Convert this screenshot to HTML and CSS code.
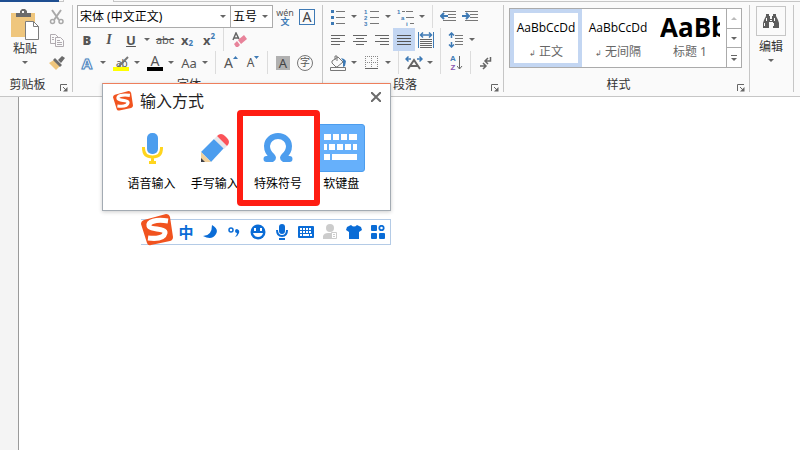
FILE: index.html
```html
<!DOCTYPE html>
<html lang="zh-CN">
<head>
    <meta charset="UTF-8">
    <meta name="viewport" content="width=device-width, initial-scale=1.0">
    <title>输入方式</title>
    <link rel="stylesheet" href="styles.css">
</head>
<body>
    <div class="tabs">
        <span class="tab-file"></span>
        <span class="tab-gap"></span>
        <span class="tab-active"></span>
        <span class="tab-rest"></span>
    </div>

    <header class="ribbon">
        <section class="group">
            <div class="clipboard">
                <button class="big-btn paste">
                    <svg width="30" height="32" viewBox="0 0 30 32">
                        <path fill="#efc67d" d="M1 4h24v24H1z"/>
                        <path fill="#6b6b6b" d="M6 4h4V2l2-2h3l2 2v2h4v4H6z"/>
                        <path fill="#fafafa" d="M12 2h2v2h-2z"/>
                        <path fill="#fff" stroke="#7d7d7d" d="M15.500 12.500h8l5 5v13h-13z"/>
                        <path fill="none" stroke="#7d7d7d" d="M23.500 12.500v5h5"/>
                    </svg>
                    <span>粘贴</span>
                    <i class="caret"></i>
                </button>
                <div class="clip-tools">
                    <button class="tool" aria-label="剪切">
                        <svg width="16" height="16" viewBox="0 0 16 16" fill="none" stroke="#a9a9a9">
                            <path stroke-width="2" d="M3 1l7 10M12 1L5 11"/>
                            <circle cx="3.500" cy="12.500" r="2" stroke-width="1.500"/>
                            <circle cx="12" cy="12.500" r="2" stroke-width="1.500"/>
                        </svg>
                    </button>
                    <button class="tool" aria-label="复制">
                        <svg width="16" height="16" viewBox="0 0 16 16" fill="#fafafa" stroke="#b0abb0">
                            <path d="M1.500 2.500h5l3 3v6h-8z"/>
                            <path d="M6.500 5.500h5l3 3v6h-8z"/>
                            <path d="M3 5.500h2M3 7.500h2M8 8.500h3M8 10.500h5M8 12.500h5"/>
                        </svg>
                    </button>
                    <button class="tool" aria-label="格式刷">
                        <svg width="16" height="16" viewBox="0 0 16 16">
                            <path fill="#efc67d" d="M0 8l5-3 6 6-4 4z"/>
                            <path fill="#6b6b6b" d="M4 5l2-2 7 7-2 2zM9 5l4-4 3 2-4 5z"/>
                        </svg>
                    </button>
                </div>
            </div>
            <footer class="group-foot"><span>剪贴板</span><button class="launcher" aria-label="剪贴板选项"><svg width="8" height="8"><path fill="none" stroke="#666" d="M.5 7V.5H7M3 3l3 3"/><path fill="#666" d="M7.500 3v4.500H3z"/></svg></button></footer>
        </section>

        <section class="group">
            <div class="row">
                <div class="combo font-name">
                    <select aria-label="字体"><option>宋体 (中文正文)</option></select>
                    <i class="caret"></i>
                </div>
                <div class="combo font-size">
                    <select aria-label="字号"><option>五号</option></select>
                    <i class="caret"></i>
                </div>
                <button class="tool pinyin"><span>wén</span><b>文</b></button>
                <button class="tool"><span class="char-box">A</span></button>
            </div>
            <div class="row">
                <button class="tool letter"><b>B</b></button>
                <button class="tool letter serif"><em>I</em></button>
                <button class="tool letter"><u>U</u></button>
                <button class="drop" aria-label="下划线样式"><i class="caret"></i></button>
                <button class="tool strike"><s>abc</s></button>
                <button class="tool script">x<sub>2</sub></button>
                <button class="tool script">x<sup>2</sup></button>
                <i class="divider"></i>
                <button class="tool" aria-label="清除格式">
                    <svg width="16" height="16" viewBox="0 0 16 16">
                        <path fill="none" stroke="#666" stroke-width="1.500" d="M2 8l3-7 3 6M3 6h4"/>
                        <path fill="#e8839a" d="M7 8l6-5 3 4-6 5zM6 9l3 4-2 2-2 0-2-3z"/>
                    </svg>
                </button>
            </div>
            <div class="row">
                <button class="tool glow">A</button>
                <button class="drop" aria-label="文本效果"><i class="caret"></i></button>
                <button class="tool marker">
                    <span>ab</span>
                    <svg width="16" height="16" viewBox="0 0 16 16">
                        <path stroke="#777" stroke-width="2" d="M15 2L8 9"/>
                        <path fill="#777" d="M5 11l3-4 2 2-3 2z"/>
                        <path fill="#ff0" d="M0 12h16v4H0z"/>
                    </svg>
                </button>
                <button class="drop" aria-label="突出显示颜色"><i class="caret"></i></button>
                <button class="tool"><span class="font-color">A</span></button>
                <button class="drop" aria-label="字体颜色"><i class="caret"></i></button>
                <button class="tool case">Aa</button>
                <button class="drop" aria-label="更改大小写"><i class="caret"></i></button>
                <i class="divider"></i>
                <button class="tool grow">A<svg width="5" height="3"><path fill="#3e7ab5" d="M0 3l2.500-3L5 3z"/></svg></button>
                <button class="tool grow small">A<svg width="5" height="3"><path fill="#3e7ab5" d="M0 0h5L2.500 3z"/></svg></button>
                <i class="divider"></i>
                <button class="tool"><span class="shade">A</span></button>
                <button class="tool"><span class="ring">字</span></button>
            </div>
            <footer class="group-foot"><span>字体</span><button class="launcher" aria-label="字体选项"></button></footer>
        </section>

        <section class="group para">
            <div class="row">
                <button class="tool" aria-label="项目符号">
                    <svg width="16" height="16" viewBox="0 0 16 16"><path fill="#3e7ab5" d="M1 1h3v3H1zM1 7h3v3H1zM1 13h3v3H1z"/><path stroke="#777" d="M6 2.500h9M6 8.500h9M6 14.500h9"/></svg>
                </button>
                <button class="drop" aria-label="项目符号库"><i class="caret"></i></button>
                <button class="tool" aria-label="编号">
                    <svg width="16" height="18" viewBox="0 0 16 18"><g class="svg-num"><text x="0" y="6">1</text><text x="0" y="12">2</text><text x="0" y="18">3</text></g><path stroke="#777" d="M6 3.500h9M6 9.500h9M6 15.500h9"/></svg>
                </button>
                <button class="drop" aria-label="编号库"><i class="caret"></i></button>
                <button class="tool" aria-label="多级列表">
                    <svg width="18" height="18" viewBox="0 0 18 18"><g class="svg-num"><text x="0" y="6">1</text><text x="4" y="12">a</text><text x="9" y="18">i</text></g><path stroke="#777" d="M5 3.500h3M9 3.500h7M9 9.500h8M13 15.500h4"/></svg>
                </button>
                <button class="drop" aria-label="列表库"><i class="caret"></i></button>
                <i class="divider"></i>
                <button class="tool" aria-label="减少缩进">
                    <svg width="16" height="14" viewBox="0 0 16 14"><path stroke="#777" d="M3 1.500h13M8 4.500h8M8 7.500h8M3 10.500h13"/><path fill="none" stroke="#3e7ab5" stroke-width="2" d="M8 6H1M4 3L1 6l3 3"/></svg>
                </button>
                <button class="tool" aria-label="增加缩进">
                    <svg width="16" height="14" viewBox="0 0 16 14"><path stroke="#777" d="M3 1.500h13M8 4.500h8M8 7.500h8M3 10.500h13"/><path fill="none" stroke="#3e7ab5" stroke-width="2" d="M0 6h7M4 3l3 3-3 3"/></svg>
                </button>
            </div>
            <div class="row">
                <button class="tool" aria-label="左对齐"><svg width="14" height="12" stroke="#666"><path d="M0 1.500h14M0 4.500h9M0 7.500h14M0 10.500h9"/></svg></button>
                <button class="tool" aria-label="居中"><svg width="14" height="12" stroke="#666"><path d="M0 1.500h14M3 4.500h8M0 7.500h14M3 10.500h8"/></svg></button>
                <button class="tool" aria-label="右对齐"><svg width="14" height="12" stroke="#666"><path d="M0 1.500h14M5 4.500h9M0 7.500h14M5 10.500h9"/></svg></button>
                <button class="tool active" aria-label="两端对齐"><svg width="14" height="12" stroke="#555"><path d="M0 1.500h14M0 4.500h14M0 7.500h14M0 10.500h14"/></svg></button>
                <button class="tool" aria-label="分散对齐">
                    <svg width="16" height="16" viewBox="0 0 16 16"><path stroke="#3e7ab5" d="M.5 0v16M15.500 0v16"/><path fill="none" stroke="#3e7ab5" stroke-width="1.500" d="M3 3h10M5 .5L2.500 3 5 5.500M11 .5L13.500 3 11 5.500"/><path stroke="#666" d="M2 7.500h12M2 9.500h12M2 11.500h12M2 13.500h12M2 15.500h12"/></svg>
                </button>
                <i class="divider"></i>
                <button class="tool" aria-label="行距">
                    <svg width="16" height="16" viewBox="0 0 16 16"><path fill="none" stroke="#3e7ab5" stroke-width="1.500" d="M3.500 1v5M1 3.500L3.500 1 6 3.500M3.500 15v-5M1 12.500L3.500 15 6 12.500"/><path stroke="#777" d="M7 3.500h8M7 6.500h8M7 9.500h8M7 12.500h8"/></svg>
                </button>
                <button class="drop" aria-label="行距选项"><i class="caret"></i></button>
            </div>
            <div class="row">
                <button class="tool" aria-label="底纹">
                    <svg width="18" height="16" viewBox="0 0 18 16"><path fill="none" stroke="#777" d="M3 6l6-4 5 5-6 5H7L3 8zM8 6V1H6v4M1.500 12.500h15v3h-15z"/><path fill="#3e7ab5" d="M12 3l3 1 2 2-1 5-2 1V6z"/></svg>
                </button>
                <button class="drop" aria-label="底纹颜色"><i class="caret"></i></button>
                <button class="tool" aria-label="边框">
                    <svg width="14" height="14" viewBox="0 0 14 14"><path stroke="#888" stroke-dasharray="1 1" d="M0 .5h13M0 6.500h13M.5 0v13M6.500 0v13M12.500 0v13"/><path stroke="#666" d="M0 12.500h13"/></svg>
                </button>
                <button class="drop" aria-label="边框样式"><i class="caret"></i></button>
                <i class="divider"></i>
                <button class="tool" aria-label="中文版式">
                    <svg width="18" height="16" viewBox="0 0 18 16" fill="none"><path stroke="#3e7ab5" stroke-width="1.500" d="M1 4h5M3.500 1.500L1 4l2.500 2.500M17 4h-5M14.500 1.500L17 4l-2.500 2.500"/><path stroke="#666" stroke-width="2" d="M3 14l6-9 6 9M5 11h8"/></svg>
                </button>
                <button class="drop" aria-label="版式选项"><i class="caret"></i></button>
                <i class="divider"></i>
                <button class="tool sort">
                    <span><b>A</b><b>Z</b></span>
                    <svg width="6" height="16" fill="none" stroke="#666"><path d="M2.500 1v13M0 11l2.500 3L5 11"/></svg>
                </button>
                <i class="divider"></i>
                <button class="tool" aria-label="显示标记">
                    <svg width="12" height="14" viewBox="0 0 12 14" fill="none" stroke="#666" stroke-width="1.500"><path d="M10.500 1v4H5M8 2L5 5l3 3M0 10h5M3 7l3 3-3 3"/></svg>
                </button>
            </div>
            <footer class="group-foot"><span>段落</span><button class="launcher" aria-label="段落选项"><svg width="8" height="8"><path fill="none" stroke="#666" d="M.5 7V.5H7M3 3l3 3"/><path fill="#666" d="M7.500 3v4.500H3z"/></svg></button></footer>
        </section>

        <section class="group styles">
            <div class="gallery">
                <button class="style selected"><span class="sample">AaBbCcDd</span><span class="style-name"><small>↲</small> 正文</span></button>
                <button class="style"><span class="sample">AaBbCcDd</span><span class="style-name"><small>↲</small> 无间隔</span></button>
                <button class="style"><span class="sample heading">AaBb</span><span class="style-name">标题 1</span></button>
                <div class="gallery-nav">
                    <button aria-label="上一行" disabled><i class="caret up"></i></button>
                    <button aria-label="下一行"><i class="caret"></i></button>
                    <button aria-label="更多"><i class="bar"></i><i class="caret"></i></button>
                </div>
            </div>
            <footer class="group-foot"><span>样式</span><button class="launcher" aria-label="样式选项"><svg width="8" height="8"><path fill="none" stroke="#666" d="M.5 7V.5H7M3 3l3 3"/><path fill="#666" d="M7.500 3v4.500H3z"/></svg></button></footer>
        </section>

        <section class="group editing">
            <button class="big-btn">
                <span class="find">
                    <svg width="16" height="14" viewBox="0 0 16 14" fill="#5c5c5c"><path d="M3 0h3v2h1v3h2V2h1V0h3v2l2 4 1 3v5h-6V8H6v6H0V9l1-3 2-4z"/><path fill="#fafafa" d="M1 9h1v3H1zM3 4h1v3H3zM10 9h1v3h-1zM11 4h1v3h-1zM7 6h2v1H7z"/></svg>
                </span>
                <span>编辑</span>
                <i class="caret"></i>
            </button>
        </section>
    </header>

    <main class="document">
        <div class="margin"></div>
        <div class="page"></div>
    </main>

    <div class="input-panel">
        <div class="panel-head">
            <svg class="logo" width="20" height="20" viewBox="0 0 32 32">
                <path fill="#f1531f" d="M3 6L25 0q3 0 4 3l3 20q0 3-3 4L10 31q-3 1-4-2L0 10q0-3 3-4z"/>
                <path fill="none" stroke="#fff" stroke-width="5" d="M27 7C14 5 7 8 8 12s17 2 16 7-9 6-17 5"/>
            </svg>
            <h1>输入方式</h1>
            <button class="close" aria-label="关闭"><svg width="10" height="10"><path stroke="#6b6b6b" stroke-width="2" d="M0 0l10 10M10 0L0 10"/></svg></button>
        </div>
        <div class="modes">
            <button class="mode">
                <span class="mode-icon">
                    <svg width="24" height="32" viewBox="0 0 24 32"><rect x="7" y="1" width="11" height="21" rx="5" fill="#4c9dee"/><path fill="none" stroke="#ffd51e" stroke-width="3" d="M3.500 15v1q0 9 9 9t9-9v-1M12.500 25v5M9 30.500h7"/></svg>
                </span>
                语音输入
            </button>
            <button class="mode">
                <span class="mode-icon">
                    <svg width="30" height="30" viewBox="0 0 30 30"><path fill="#4c9dee" d="M1 19L14 6l10 9-13 14z"/><path fill="#f3d19b" d="M1 19l10 10H1z"/><path fill="#3e4048" d="M1 25l4 4H1z"/><path fill="#e6e6ea" d="M14 6l3-3 10 10-3 3z"/><path fill="#fb5359" d="M17 3q4-4 8 0l2 2q4 4 0 8z"/></svg>
                </span>
                手写输入
            </button>
            <button class="mode marked">
                <span class="mode-icon">
                    <svg width="30" height="30" viewBox="0 0 30 30"><path fill="none" stroke="#4c9dee" stroke-width="6" stroke-linecap="round" d="M3.500 26H9q2-1 0-3-5-4-5-10a11 10 0 0 1 22 0q0 6-5 10-2 2 0 3h5.500"/></svg>
                </span>
                特殊符号
            </button>
            <button class="mode">
                <span class="mode-icon tile">
                    <svg width="34" height="28" viewBox="0 0 34 28" fill="#fff"><path d="M0 0h7v6H0zM9 0h6v6H9zM17 0h6v6h-6zM25 0h8v6h-8zM0 10h3v6H0zM5 10h6v6H5zM13 10h6v6h-6zM21 10h6v6h-6zM29 10h4v6h-4zM0 20h6v6H0zM8 20h25v6H8z"/></svg>
                </span>
                软键盘
            </button>
        </div>
    </div>

    <div class="ime-bar">
        <svg class="logo" width="32" height="32" viewBox="0 0 32 32">
            <path fill="#f1531f" d="M3 6L25 0q3 0 4 3l3 20q0 3-3 4L10 31q-3 1-4-2L0 10q0-3 3-4z"/>
            <path fill="none" stroke="#fff" stroke-width="5" d="M27 7C14 5 7 8 8 12s17 2 16 7-9 6-17 5"/>
        </svg>
        <button class="ime-btn"><b>中</b></button>
        <button class="ime-btn" aria-label="半角"><svg width="14" height="14"><path fill="#0a6cd6" d="M9 0q7 4 4 9-4 7-13 2 9 0 9-11z"/></svg></button>
        <button class="ime-btn" aria-label="中文标点"><svg width="14" height="14"><circle cx="4" cy="5" r="2" fill="none" stroke="#0a6cd6" stroke-width="1.500"/><path fill="#0a6cd6" d="M8 6q0-2 2-2 3 1 2 4-1 3-4 4 2-2 2-4-2 0-2-2z"/></svg></button>
        <button class="ime-btn" aria-label="表情"><svg width="16" height="16"><circle cx="8" cy="8" r="7.500" fill="#0a6cd6"/><path fill="#fff" d="M4 4h2v3H4zM10 4h2v3h-2zM3 9h10q-1 4-5 4T3 9z"/></svg></button>
        <button class="ime-btn" aria-label="语音"><svg width="14" height="16"><rect x="4" y="0" width="6" height="10" rx="3" fill="#0a6cd6"/><path fill="none" stroke="#0a6cd6" stroke-width="2" d="M2 6q0 6 5 6t5-6M7 12v1M4 15h6"/></svg></button>
        <button class="ime-btn" aria-label="键盘"><svg width="16" height="12"><rect width="16" height="12" rx="1" fill="#0a6cd6"/><path stroke="#fff" stroke-width="2" stroke-dasharray="2 1" d="M2 3h12M2 6h12"/><path stroke="#fff" stroke-width="2" d="M2 9h2M5 9h6M12 9h2"/></svg></button>
        <button class="ime-btn" aria-label="账号"><svg width="14" height="16"><circle cx="7" cy="4" r="4" fill="#ccc"/><path fill="#ccc" d="M0 15V12q1-3 5-3h8v6z"/><path fill="#fff" stroke="#ccc" d="M8.500 8.500h5v6h-5z"/><path stroke="#ccc" d="M10 10.500h2M10 12.500h2"/></svg></button>
        <button class="ime-btn" aria-label="皮肤"><svg width="16" height="14"><path fill="#0a6cd6" d="M5 0q3 3 6 0l4 2 1 3-3 2v7H3V7L0 5l1-3z"/></svg></button>
        <button class="ime-btn" aria-label="工具箱"><svg width="14" height="14" fill="#0a6cd6"><rect width="6" height="6" rx="1"/><circle cx="10.500" cy="3" r="2.200" fill="none" stroke="#0a6cd6" stroke-width="1.800"/><rect y="8" width="6" height="6" rx="1"/><rect x="8" y="8" width="6" height="6" rx="1"/></svg></button>
    </div>
</body>
</html>
```
FILE: styles.css
```css
* {
    box-sizing: border-box;
}

body {
    margin: 0;
    min-height: 100vh;
    display: flex;
    flex-direction: column;
    position: relative;
    font-family: "Noto Sans", "Noto Sans CJK SC", sans-serif;
    font-size: 12px;
    line-height: 16px;
    color: #333;
    background-color: #fff;
}

button {
    display: flex;
    align-items: center;
    justify-content: center;
    padding: 0;
    border: none;
    background: none;
    font: inherit;
    color: inherit;
}

svg {
    flex-shrink: 0;
}

/* ribbon */
.tabs {
    display: flex;
    height: 2px;
    background-color: #fafafa;
}

.tab-file {
    width: 59px;
    background-color: #1e4e91;
}

.tab-gap {
    width: 5px;
    border: 1px solid #c6c6c6;
    border-width: 0 1px 1px 0;
}

.tab-active {
    width: 49px;
}

.tab-rest {
    flex: 1;
    border: 1px solid #c6c6c6;
    border-width: 0 0 1px 1px;
}

.ribbon {
    display: flex;
    padding: 3px 0 0;
    background-color: #fafafa;
    border-bottom: 1px solid #c6c6c6;
}

.group {
    display: flex;
    flex-direction: column;
    justify-content: space-between;
    padding: 0 4px 0 3px;
    border-right: 1px solid #c6c6c6;
    margin-bottom: 4px;
}

.para {
    padding-left: 4px;
}

.para .row {
    padding-right: 2px;
}

.row {
    display: flex;
    align-items: center;
    height: 23px;
}

.tool {
    width: 22px;
    height: 23px;
    color: #555;
}

.active {
    background-color: #c3d6f2;
}

.drop {
    width: 12px;
    height: 23px;
    justify-content: flex-start;
    padding-left: 2px;
}

.caret {
    border: 3px solid transparent;
    border-top-color: #666;
    border-bottom: 0;
}

.up {
    border-top: 0;
    border-bottom: 3px solid #bbb;
}

.divider {
    width: 1px;
    height: 23px;
    margin: 0 4px 0 3px;
    background-color: #dcdcdc;
}

.group-foot {
    display: flex;
    align-items: flex-end;
    height: 18px;
    line-height: 14px;
    text-align: center;
}

.group-foot span {
    flex: 1;
}

.launcher {
    width: 16px;
    height: 16px;
    align-items: flex-end;
    justify-content: flex-end;
}

.clipboard {
    display: flex;
    justify-content: space-between;
    width: 65px;
    padding-left: 5px;
}

.big-btn {
    flex-direction: column;
    justify-content: flex-start;
}

.big-btn .caret {
    margin-top: 4px;
}

.paste {
    width: 34px;
    padding-top: 4px;
}

.clip-tools {
    display: flex;
    flex-direction: column;
}

.combo {
    display: grid;
    align-items: center;
    height: 23px;
    border: 1px solid #ababab;
    background-color: #fff;
}

.combo select,
.combo .caret {
    grid-area: 1 / 1;
}

.combo select {
    appearance: none;
    width: 100%;
    height: 21px;
    padding: 0 2px;
    border: none;
    background: none;
    font: inherit;
    color: #000;
}

.combo .caret {
    justify-self: end;
    margin-right: 4px;
}

.font-name {
    width: 154px;
    margin-left: 1px;
}

.font-size {
    width: 43px;
    margin-left: -1px;
}

.pinyin {
    flex-direction: column;
    margin-left: 1px;
    font-size: 9px;
    line-height: 9px;
}

.pinyin b {
    color: #3e7ab5;
}

.char-box {
    width: 16px;
    height: 16px;
    border: 1px solid #3e7ab5;
    font-size: 14px;
    line-height: 14px;
    color: #444;
}

.letter {
    font-size: 13px;
    font-weight: bold;
}

.serif {
    font-family: "Liberation Serif", serif;
    font-size: 14px;
}

.strike {
    font-size: 11px;
}

.script {
    font-size: 13px;
    font-weight: bold;
}

.script sub,
.script sup {
    font-size: 8px;
    line-height: 8px;
    color: #3e7ab5;
}

.script sub {
    align-self: flex-end;
    margin-bottom: 4px;
}

.script sup {
    align-self: flex-start;
    margin-top: 4px;
}

.glow {
    font-size: 15px;
    font-weight: bold;
    color: #fff;
    -webkit-text-stroke: 1px #4a83bd;
    text-shadow: 0 0 2px #9dc3e8;
}

.marker {
    display: grid;
    align-content: center;
    justify-items: center;
}

.marker span,
.marker svg {
    grid-area: 1 / 1;
}

.marker span {
    justify-self: start;
    padding-left: 3px;
    font-size: 10px;
    line-height: 8px;
}

.font-color {
    width: 16px;
    height: 16px;
    border-bottom: 4px solid #000;
    font-size: 14px;
    line-height: 12px;
}

.case {
    font-size: 13px;
}

.grow {
    font-size: 14px;
}

.grow svg {
    align-self: flex-start;
    margin-top: 5px;
}

.small {
    font-size: 12px;
}

.shade {
    width: 14px;
    height: 14px;
    background-color: #b1b1b1;
    font-size: 13px;
    line-height: 14px;
    color: #444;
}

.ring {
    width: 16px;
    height: 16px;
    border: 1px solid #777;
    border-radius: 50%;
    font-size: 10px;
    line-height: 13px;
}

.svg-num {
    font-family: "Liberation Sans", sans-serif;
    font-size: 6px;
    font-weight: bold;
    fill: #3e7ab5;
}

.sort span {
    display: flex;
    flex-direction: column;
    width: 8px;
    font-family: "Liberation Sans", sans-serif;
    font-size: 8px;
    line-height: 9px;
    color: #3e7ab5;
}

.sort b + b {
    color: #8a55b0;
}

/* style gallery */
.styles {
    padding: 0 4px;
}

.gallery {
    display: flex;
    margin: 3px 3px 0 1px;
    height: 60px;
    border: 1px solid #ababab;
    background-color: #fff;
}

.style {
    flex-direction: column;
    width: 72px;
    border: 4px solid transparent;
    overflow: hidden;
    color: #666;
}

.selected {
    border-color: #c3d6f2;
}

.sample {
    height: 28px;
    font-family: "Open Sans", sans-serif;
    font-size: 12px;
    line-height: 28px;
    color: #000;
}

.heading {
    width: 60px;
    overflow: hidden;
    font-size: 26px;
    line-height: 26px;
    font-weight: bold;
    text-align: left;
}

.style-name {
    height: 20px;
    line-height: 20px;
}

.style-name small {
    font-size: 8px;
}

.gallery-nav {
    display: flex;
    flex-direction: column;
    width: 15px;
    border-left: 1px solid #ababab;
}

.gallery-nav button {
    flex: 1;
    flex-direction: column;
    gap: 2px;
}

.gallery-nav button + button {
    border-top: 1px solid #ababab;
}

.bar {
    width: 6px;
    height: 1px;
    background-color: #666;
}

.editing {
    padding: 1px 7px 0 6px;
    justify-content: flex-start;
}

.find {
    display: flex;
    align-items: center;
    justify-content: center;
    width: 30px;
    height: 30px;
    margin-bottom: 3px;
    border: 1px solid #c6c6c6;
}

/* document area */
.document {
    flex: 1;
    display: flex;
}

.margin {
    width: 19px;
    background-color: #f4f4f4;
    border-right: 1px solid #9a9a9a;
}

.page {
    flex: 1;
    background-color: #fff;
}

/* floating input method windows */
.input-panel {
    position: absolute;
    left: 102px;
    top: 83px;
    width: 289px;
    padding-bottom: 18px;
    background-color: #fff;
    border: 1px solid #a3abb3;
    border-top-color: #ee7f5c;
    box-shadow: 0 1px 4px rgba(0, 0, 0, 0.2);
    color: #000;
}

.panel-head {
    display: flex;
    align-items: center;
    height: 34px;
    padding: 0 9px 0 10px;
}

.panel-head h1 {
    flex: 1;
    margin: 0 0 0 7px;
    font-size: 16px;
    font-weight: normal;
    line-height: 24px;
    color: #222;
}

.close {
    width: 10px;
    height: 26px;
    align-self: flex-start;
}

.modes {
    display: grid;
    grid-template-columns: repeat(4, 1fr);
    padding: 6px 17px 0;
}

.mode {
    position: relative;
    flex-direction: column;
    gap: 4px;
    white-space: nowrap;
}

.mode-icon {
    display: flex;
    align-items: center;
    justify-content: center;
    width: 48px;
    height: 48px;
}

.tile {
    border: 1px solid #4c9dee;
    border-radius: 3px;
    background-color: #66b0fb;
}

.marked::after {
    content: "";
    position: absolute;
    inset: -14px -10px;
    border: 6px solid #ff1d12;
    border-radius: 4px;
    z-index: 1;
}

.ime-bar {
    position: absolute;
    left: 141px;
    top: 219px;
    display: flex;
    align-items: center;
    height: 26px;
    border: 1px solid #b4cbe6;
    border-left: none;
    background-color: #fff;
}

.ime-bar .logo {
    margin: -4px 1px 0 0;
}

.ime-btn {
    width: 24px;
    height: 24px;
    font-size: 15px;
    color: #0a6cd6;
}
```
